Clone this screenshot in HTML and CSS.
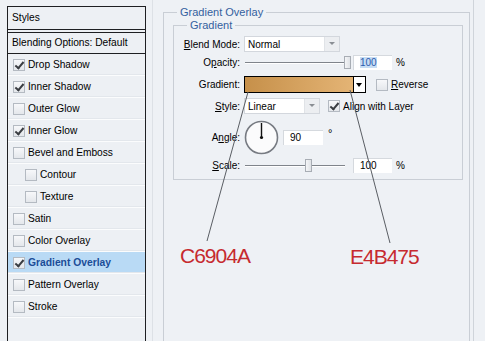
FILE: index.html
```html
<!DOCTYPE html>
<html>
<head>
<meta charset="utf-8">
<link rel="stylesheet" href="styles.css">
</head>
<body>
<div class="page">
  <aside class="styles">
    <div class="styles-head">Styles</div>
    <div class="blend-opt">Blending Options: Default</div>
    <ul class="fx-list">
      <li class="fx"><span class="cb on"></span>Drop Shadow</li>
      <li class="fx"><span class="cb on"></span>Inner Shadow</li>
      <li class="fx"><span class="cb"></span>Outer Glow</li>
      <li class="fx"><span class="cb on"></span>Inner Glow</li>
      <li class="fx"><span class="cb"></span>Bevel and Emboss</li>
      <li class="fx sub"><span class="cb"></span>Contour</li>
      <li class="fx sub"><span class="cb"></span>Texture</li>
      <li class="fx"><span class="cb"></span>Satin</li>
      <li class="fx"><span class="cb"></span>Color Overlay</li>
      <li class="fx active"><span class="cb on"></span>Gradient Overlay</li>
      <li class="fx"><span class="cb"></span>Pattern Overlay</li>
      <li class="fx"><span class="cb"></span>Stroke</li>
    </ul>
  </aside>

  <main class="dialog">
    <fieldset class="group outer">
      <legend>Gradient Overlay</legend>
      <fieldset class="group inner">
        <legend>Gradient</legend>

        <div class="row r-blend">
          <span class="lbl"><u>B</u>lend Mode:</span>
          <div class="select w-blend"><span class="val">Normal</span><span class="arr"></span></div>
        </div>

        <div class="row r-opacity">
          <span class="lbl">O<u>p</u>acity:</span>
          <div class="slider"><span class="track"></span><span class="thumb" style="left:99px"></span></div>
          <span class="num"><span class="sel">100</span></span>
          <span class="unit">%</span>
        </div>

        <div class="row r-grad">
          <span class="lbl">Gradient:</span>
          <div class="grad"><span class="swatch"></span><span class="garr"></span></div>
          <span class="cb chk-reverse"></span>
          <span class="opt"><u>R</u>everse</span>
        </div>

        <div class="row r-style">
          <span class="lbl"><u>S</u>tyle:</span>
          <div class="select w-style"><span class="val">Linear</span><span class="arr"></span></div>
          <span class="cb on chk-align"></span>
          <span class="opt">Ali<u>g</u>n with Layer</span>
        </div>

        <div class="row r-angle">
          <span class="lbl">A<u>n</u>gle:</span>
          <svg class="dial" width="35" height="35" viewBox="0 0 35 35">
            <circle cx="17.5" cy="17.5" r="16" fill="#fbfbfc" stroke="#777b82" stroke-width="1.6"/>
            <line x1="17.5" y1="17.5" x2="17.5" y2="3" stroke="#111" stroke-width="1.4"/>
            <circle cx="17.5" cy="17.5" r="1.6" fill="#111"/>
          </svg>
          <span class="num n-angle">90</span>
          <span class="deg">°</span>
        </div>

        <div class="row r-scale">
          <span class="lbl"><u>S</u>cale:</span>
          <div class="slider"><span class="track"></span><span class="thumb" style="left:60px"></span></div>
          <span class="num">100</span>
          <span class="unit">%</span>
        </div>
      </fieldset>
    </fieldset>
    <div class="edge"></div>
  </main>

  <div class="annot">
    <svg class="leaders" width="485" height="341" viewBox="0 0 485 341">
      <line x1="248" y1="92" x2="207" y2="241" stroke="#5a5e64" stroke-width="1"/>
      <line x1="350" y1="90" x2="390" y2="243" stroke="#5a5e64" stroke-width="1"/>
    </svg>
    <span class="code code-a">C6904A</span>
    <span class="code code-b">E4B475</span>
  </div>
</div>
</body>
</html>
```
FILE: styles.css
```css
* { box-sizing: border-box; }

html, body {
  margin: 0;
  padding: 0;
}

body {
  width: 485px;
  height: 341px;
  overflow: hidden;
  background: #eef1f5;
  font-family: "Liberation Sans", Arial, sans-serif;
  font-size: 10px;
  color: #000;
}

.page {
  position: relative;
  display: flex;
  align-items: flex-start;
  width: 485px;
  height: 341px;
  overflow: hidden;
}

/* ---------- Styles list ---------- */
.styles {
  flex: none;
  width: 139px;
  height: 400px;
  margin: 6px 0 0 7px;
  border: 1px solid #1e1f22;
  border-bottom: none;
  background: #edf0f4;
  font-size: 10.2px;
}

.styles-head {
  height: 23px;
  padding-left: 4px;
  line-height: 21px;
  border-bottom: 1px solid #1e1f22;
}

.blend-opt {
  height: 22px;
  margin-top: 2px;
  padding-left: 4px;
  line-height: 20px;
  border-top: 1px solid #1e1f22;
  border-bottom: 1px solid #1e1f22;
}

.fx-list {
  list-style: none;
  margin: 0;
  padding: 0;
}

.fx {
  display: flex;
  align-items: center;
  height: 22px;
  padding-left: 5px;
  border-bottom: 1px solid #fbfcfd;
  box-shadow: inset 0 -1px 0 #e3e7ec;
}

.fx.sub { padding-left: 17px; }

.fx.active {
  background: #b9daf5;
  color: #1b4d98;
  font-weight: bold;
  font-size: 10.3px;
}

.fx .cb { margin-right: 3px; }

/* checkbox */
.cb {
  position: relative;
  flex: none;
  display: inline-block;
  width: 12px;
  height: 12px;
  border: 1px solid #b4bac2;
  background: linear-gradient(#f7f8fa, #e4e7eb);
}

.cb.on::after {
  content: "";
  position: absolute;
  left: 3px;
  top: 0px;
  width: 3px;
  height: 7px;
  border-right: 2px solid #3a3d42;
  border-bottom: 2px solid #3a3d42;
  transform: rotate(40deg);
}

/* ---------- Dialog ---------- */
.dialog {
  flex: 1;
  display: flex;
  align-items: flex-start;
  height: 341px;
  margin-left: 6px;
  border-left: 1px solid #dde1e6;
}

.group {
  margin: 0;
  border: 1px solid #c9ced5;
  min-width: 0;
}

.group > legend {
  color: #33609e;
  font-size: 11px;
  line-height: 12px;
  padding: 0 3px;
}

.outer {
  flex: none;
  width: 307px;
  height: 420px;
  margin: 6px 0 0 10px;
  padding: 0 6px 0 9px;
}

.outer > legend { margin-left: 4px; }

.inner {
  margin-top: 1px;
  padding: 0 0 6px 0;
}

.inner > legend { margin-left: 13px; }

.edge {
  flex: none;
  width: 1px;
  height: 341px;
  margin-left: 3px;
  background: #cfd4da;
}

/* rows */
.row {
  display: flex;
  align-items: center;
}

.lbl {
  flex: none;
  width: 66px;
  text-align: right;
  margin-right: 4px;
  white-space: nowrap;
}

.r-blend   { margin-top: 5px; height: 16px; }
.r-opacity { margin-top: 3px; height: 15px; }
.r-grad    { margin-top: 6px; height: 17px; }
.r-style   { margin-top: 5px; height: 16px; }
.r-angle   { margin-top: 6px; height: 35px; }
.r-scale   { margin-top: 2px; height: 16px; }

/* select */
.select {
  flex: none;
  display: flex;
  align-items: center;
  height: 16px;
  background: #fff;
  border: 1px solid #d3d7dd;
}

.w-blend { width: 96px; }
.w-style { width: 76px; }

.select .val {
  flex: 1;
  padding-left: 3px;
}

.select .arr {
  position: relative;
  flex: none;
  width: 15px;
  height: 14px;
  background: #eceef1;
  border-left: 1px solid #e0e3e7;
}

.select .arr::after {
  content: "";
  position: absolute;
  left: 4px;
  top: 5px;
  border-left: 3px solid transparent;
  border-right: 3px solid transparent;
  border-top: 3px solid #8a8e94;
}

/* slider */
.slider {
  position: relative;
  flex: none;
  width: 106px;
  height: 13px;
  margin-left: 1px;
}

.slider .track {
  position: absolute;
  left: 0;
  top: 6px;
  width: 100px;
  height: 2px;
  border-top: 1px solid #7f848b;
  border-bottom: 1px solid #ffffff;
}

.slider .thumb {
  position: absolute;
  top: 0;
  width: 7px;
  height: 13px;
  border: 1px solid #a8adb4;
  background: linear-gradient(90deg, #f4f5f7, #dfe2e6);
}

/* numeric field */
.num {
  flex: none;
  width: 39px;
  height: 15px;
  margin-left: 2px;
  padding-left: 6px;
  line-height: 14px;
  background: #fff;
  border-top: 1px solid #d5d9de;
  border-left: 1px solid #d5d9de;
}

.num .sel {
  background: #c7ddf4;
  color: #2b5cae;
}

.unit { margin-left: 4px; }

/* gradient picker */
.grad {
  flex: none;
  display: flex;
  height: 17px;
}

.grad .swatch {
  width: 110px;
  height: 17px;
  border: 1px solid #000;
  background: linear-gradient(90deg, #c6904a, #e4b475);
}

.grad .garr {
  position: relative;
  width: 12px;
  height: 17px;
  border: 1px solid #000;
  border-left: none;
  background: #fff;
}

.grad .garr::after {
  content: "";
  position: absolute;
  left: 2px;
  top: 6px;
  border-left: 3px solid transparent;
  border-right: 3px solid transparent;
  border-top: 4px solid #000;
}

.chk-reverse { margin-left: 10px; }
.chk-align { margin-left: 8px; }

.opt { margin-left: 3px; white-space: nowrap; }

/* angle */
.dial { flex: none; display: block; }

.n-angle {
  width: 40px;
  margin-left: 4px;
}

.deg {
  align-self: flex-start;
  margin-top: 7px;
  margin-left: 5px;
  font-size: 11px;
}

/* annotations */
.annot {
  position: absolute;
  inset: 0;
  pointer-events: none;
}

.leaders {
  position: absolute;
  left: 0;
  top: 0;
}

.code {
  position: absolute;
  color: #c62a2f;
  font-family: "Liberation Sans", Arial, sans-serif;
  font-size: 21px;
  line-height: 21px;
  letter-spacing: -1px;
}

.code-a { left: 180px; top: 245px; }
.code-b { left: 350px; top: 246px; }
```
